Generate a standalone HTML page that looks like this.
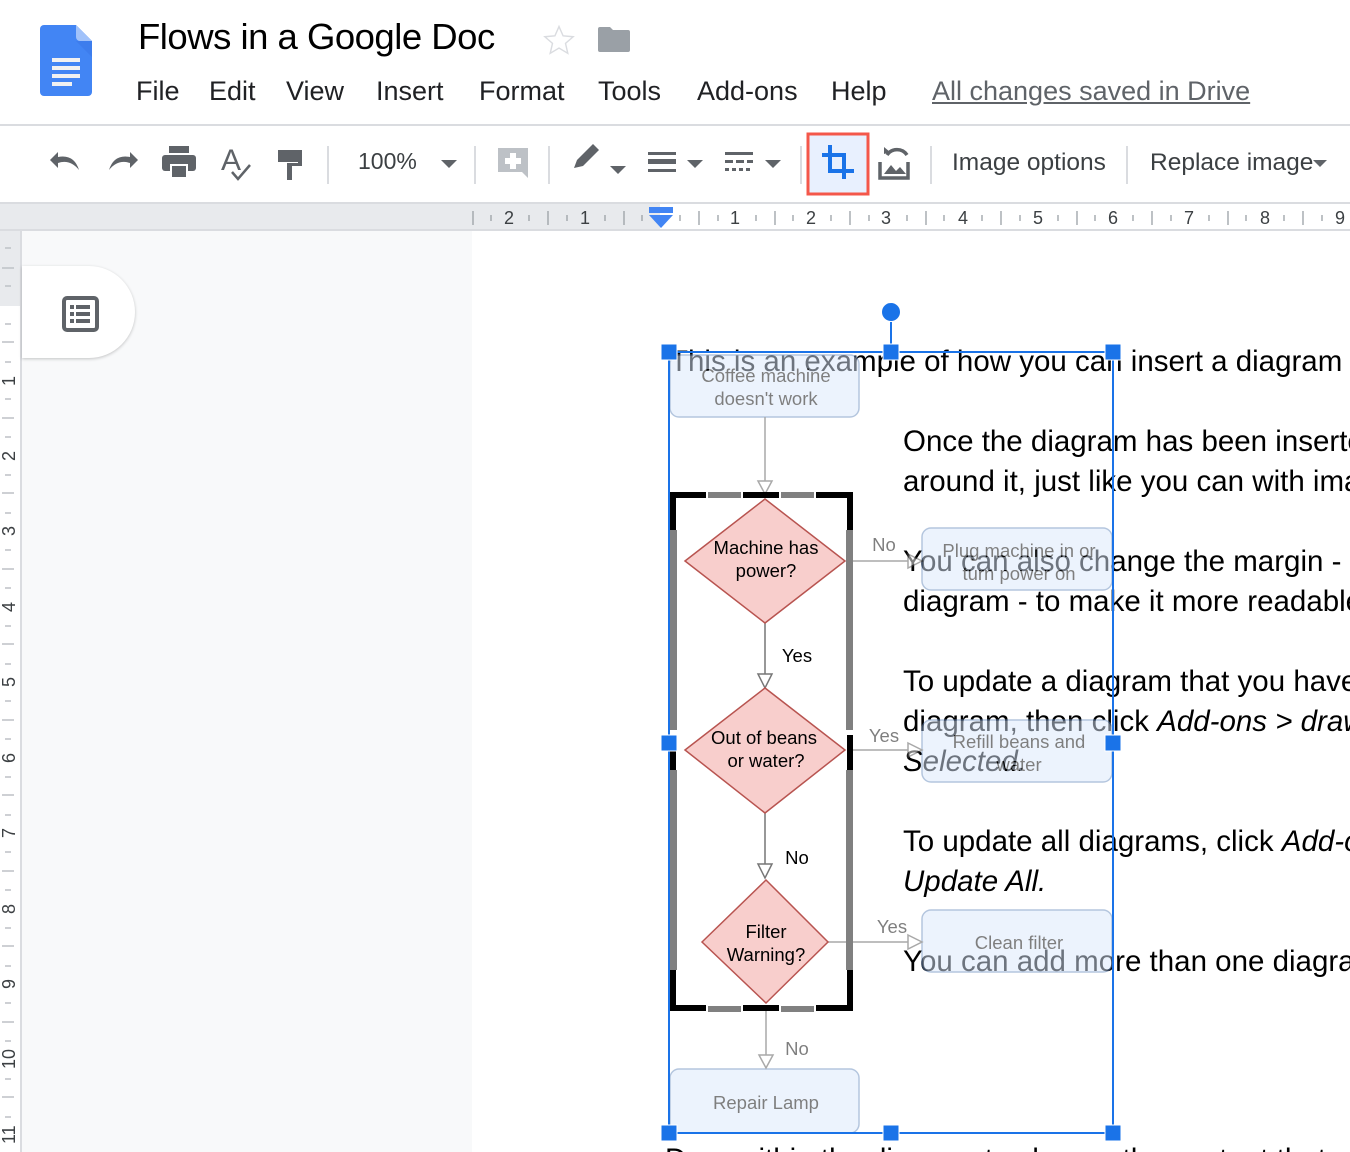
<!DOCTYPE html>
<html><head><meta charset="utf-8">
<style>
*{margin:0;padding:0;box-sizing:border-box}
html,body{width:1350px;height:1152px;overflow:hidden}
body{background:#f8f9fa;font-family:"Liberation Sans",Arial,sans-serif;position:relative}
.a{position:absolute;white-space:nowrap}
.menu{top:76px;font-size:27px;color:#202124}
.doc{position:absolute;left:472px;top:231px;width:878px;height:921px;background:#fff}
.t{position:absolute;font-size:29.5px;color:#000;white-space:nowrap;line-height:32px}
</style></head><body>
<div class="a" style="left:0;top:0;width:1350px;height:125px;background:#fff"></div>
<svg class="a" style="left:40px;top:25px" width="52" height="71" viewBox="0 0 52 71">
<path d="M4 0H36L52 16V67a4 4 0 0 1-4 4H4a4 4 0 0 1-4-4V4a4 4 0 0 1 4-4z" fill="#4285f4"/>
<path d="M36 0L52 16H40a4 4 0 0 1-4-4z" fill="#a1c2fa"/>
<path d="M36 16L52 32V16z" fill="#3b78e7" opacity=".6"/>
<rect x="12" y="33" width="28" height="4" fill="#f1f1f1"/><rect x="12" y="41" width="28" height="4" fill="#f1f1f1"/><rect x="12" y="49" width="28" height="4" fill="#f1f1f1"/><rect x="12" y="57" width="20" height="4" fill="#f1f1f1"/>
</svg>
<div class="a" style="left:138px;top:16px;font-size:36.5px;color:#000;letter-spacing:-.5px">Flows in a Google Doc</div>
<svg class="a" style="left:542px;top:23px" width="34" height="34" viewBox="0 0 24 24"><path d="M12 2.5l2.9 6.6 7.1.6-5.4 4.7 1.6 7-6.2-3.7-6.2 3.7 1.6-7L2 9.7l7.1-.6z" fill="none" stroke="#dadce0" stroke-width="1"/></svg>
<svg class="a" style="left:597px;top:25px" width="34" height="28" viewBox="0 0 34 28"><path d="M3 2h10l3 3h15a2 2 0 0 1 2 2v18a2 2 0 0 1-2 2H3a2 2 0 0 1-2-2V4a2 2 0 0 1 2-2z" fill="#9aa0a6"/></svg>
<div class="a menu" style="left:136px">File</div>
<div class="a menu" style="left:209px">Edit</div>
<div class="a menu" style="left:286px">View</div>
<div class="a menu" style="left:376px">Insert</div>
<div class="a menu" style="left:479px">Format</div>
<div class="a menu" style="left:598px">Tools</div>
<div class="a menu" style="left:697px">Add-ons</div>
<div class="a menu" style="left:831px">Help</div>
<div class="a menu" style="left:932px;color:#5f6368;text-decoration:underline">All changes saved in Drive</div>
<div class="a" style="left:0;top:124px;width:1350px;height:2px;background:#dadce0"></div>
<div class="a" style="left:0;top:126px;width:1350px;height:77px;background:#fff"></div>
<svg class="a" style="left:0;top:126px" width="1350" height="77">
<g fill="#5f6368">
<path d="M58 26 L50 34 L58 42 V37 Q70 33 79 44 Q74 28 58 31z"/>
<path d="M130 26 L138 34 L130 42 V37 Q118 33 109 44 Q114 28 130 31z"/>
<rect x="169" y="20" width="20" height="7"/><rect x="162" y="29" width="34" height="16" rx="3"/><rect x="170" y="38" width="18" height="13" fill="#fff"/><rect x="172" y="40" width="14" height="11"/>
<rect x="278" y="24" width="24" height="12"/><rect x="298" y="29" width="4" height="10"/><rect x="287" y="37" width="15" height="3"/><rect x="287" y="37" width="5" height="17"/>
<rect x="327" y="20" width="2" height="38" fill="#dadce0"/>
<path d="M441 34h16l-8 8z"/>
<rect x="474" y="20" width="2" height="38" fill="#dadce0"/>
<path d="M498 22h30v30l-6-6h-24z" fill="#bdc1c6"/><rect x="510" y="27" width="6" height="16" fill="#fff"/><rect x="505" y="32" width="16" height="6" fill="#fff"/>
<rect x="548" y="20" width="2" height="38" fill="#dadce0"/>
<path d="M574 42 l3-8 16-16 6 6-16 16z"/><path d="M610 40h16l-8 8z"/>
<rect x="648" y="26" width="28" height="3"/><rect x="648" y="33" width="28" height="5"/><rect x="648" y="43" width="28" height="3"/><path d="M687 34h16l-8 8z"/>
<rect x="725" y="26" width="28" height="3"/><rect x="725" y="34" width="8" height="3"/><rect x="736" y="34" width="8" height="3"/><rect x="747" y="34" width="6" height="3"/><rect x="725" y="42" width="4" height="3"/><rect x="732" y="42" width="4" height="3"/><rect x="739" y="42" width="4" height="3"/><rect x="746" y="42" width="4" height="3"/><path d="M765 34h16l-8 8z"/>
<rect x="800" y="20" width="2" height="38" fill="#dadce0"/>
<rect x="930" y="20" width="2" height="38" fill="#dadce0"/>
<rect x="1126" y="20" width="2" height="38" fill="#dadce0"/>
<path d="M1313 34h14l-7 7z"/>
</g>
<rect x="808" y="8" width="60" height="60" fill="#e8f0fe" stroke="#f4574a" stroke-width="3"/>
<g fill="none" stroke="#1a73e8" stroke-width="4"><path d="M822 29h22v24"/><path d="M830 19v26h24"/></g>
<g fill="none" stroke="#5f6368" stroke-width="3.5"><path d="M880 36v16h28V36"/><path d="M887 29a12 12 0 0 1 20 0"/></g>
<path d="M884 48l7-9 5 6 4-4 6 7z" fill="#5f6368"/><path d="M884 28v-7l6 5z" fill="#5f6368"/>
</svg>
<div class="a" style="left:358px;top:148px;font-size:23px;color:#3c4043">100%</div>
<div class="a" style="left:221px;top:144px;font-size:30px;color:#5f6368">A</div>
<svg class="a" style="left:222px;top:150px" width="30" height="32"><path d="M10 22l6 7 12-14" fill="none" stroke="#5f6368" stroke-width="2.5"/></svg>
<div class="a" style="left:952px;top:149px;font-size:24.5px;color:#3c4043">Image options</div>
<div class="a" style="left:1150px;top:149px;font-size:24.5px;color:#3c4043">Replace image</div>
<div class="a" style="left:0;top:202px;width:1350px;height:2px;background:#dadce0"></div>
<div class="a" style="left:0;top:204px;width:1350px;height:26px;background:#e8eaed"></div>
<div class="a" style="left:660px;top:204px;width:690px;height:26px;background:#fff"></div>
<div class="a" style="left:0;top:229px;width:1350px;height:2px;background:#dadce0"></div>
<svg class="a" style="left:0;top:204px" width="1350" height="26" font-family="Liberation Sans,Arial" font-size="18" fill="#3c4043">
<g stroke="#9aa0a6" stroke-width="1.3">
<path d="M473 7v14M548 7v14M624 7v14M699 7v14M775 7v14M850 7v14M926 7v14M1001 7v14M1077 7v14M1152 7v14M1228 7v14M1303 7v14"/>
<path d="M491 11v6M529 11v6M567 11v6M605 11v6M642 11v6M680 11v6M718 11v6M756 11v6M793 11v6M831 11v6M869 11v6M907 11v6M944 11v6M982 11v6M1020 11v6M1058 11v6M1095 11v6M1133 11v6M1171 11v6M1209 11v6M1246 11v6M1284 11v6M1322 11v6"/>
</g>
<text x="504" y="20">2</text><text x="580" y="20">1</text><text x="730" y="20">1</text><text x="806" y="20">2</text><text x="881" y="20">3</text><text x="958" y="20">4</text><text x="1033" y="20">5</text><text x="1108" y="20">6</text><text x="1184" y="20">7</text><text x="1260" y="20">8</text><text x="1335" y="20">9</text>
<rect x="649" y="3" width="24" height="6" fill="#4285f4"/><path d="M649 11h24l-12 13z" fill="#4285f4"/>
</svg>
<div class="a" style="left:0;top:231px;width:20px;height:921px;background:#fff"></div>
<div class="a" style="left:0;top:231px;width:20px;height:75px;background:#e8eaed"></div>
<div class="a" style="left:20px;top:231px;width:2px;height:921px;background:#dadce0"></div>
<svg class="a" style="left:0;top:231px" width="20" height="921" font-family="Liberation Sans,Arial" font-size="18" fill="#3c4043">
<g stroke="#bdc1c6" stroke-width="1.5">
<path d="M5 17h6M2 37h12M5 55h6M5 93h6M2 111h12M5 131h6M5 168h6M2 187h12M5 206h6M5 244h6M2 262h12M5 282h6M5 319h6M2 338h12M5 357h6M5 395h6M2 413h12M5 433h6M5 470h6M2 489h12M5 508h6M5 546h6M2 564h12M5 584h6M5 621h6M2 640h12M5 659h6M5 697h6M2 715h12M5 735h6M5 772h6M2 791h12M5 810h6M5 848h6M2 866h12M5 886h6"/>
</g>
<g transform="rotate(-90)">
<text x="-155" y="15">1</text><text x="-230" y="15">2</text><text x="-305" y="15">3</text><text x="-381" y="15">4</text><text x="-456" y="15">5</text><text x="-532" y="15">6</text><text x="-607" y="15">7</text><text x="-683" y="15">8</text><text x="-758" y="15">9</text><text x="-838" y="15">10</text><text x="-913" y="15">11</text>
</g>
</svg>
<div class="a" style="left:22px;top:266px;width:113px;height:92px;background:#fff;border-radius:0 46px 46px 0;box-shadow:0 1px 3px rgba(0,0,0,.22)"></div>
<svg class="a" style="left:62px;top:296px" width="37" height="36" viewBox="0 0 37 36"><rect x="2" y="2" width="33" height="32" rx="3" fill="none" stroke="#5f6368" stroke-width="4"/><g fill="#5f6368"><rect x="8" y="9" width="4" height="4"/><rect x="14" y="9" width="14" height="4"/><rect x="8" y="16" width="4" height="4"/><rect x="14" y="16" width="14" height="4"/><rect x="8" y="23" width="4" height="4"/><rect x="14" y="23" width="14" height="4"/></g></svg>
<div class="doc"></div>
<div class="t" style="left:670px;top:346px">This is an example of how you can insert a diagram</div>
<div class="t" style="left:903px;top:426px">Once the diagram has been inserted</div>
<div class="t" style="left:903px;top:466px">around it, just like you can with images</div>
<div class="t" style="left:903px;top:546px">You can also change the margin - the</div>
<div class="t" style="left:903px;top:586px">diagram - to make it more readable</div>
<div class="t" style="left:903px;top:666px">To update a diagram that you have</div>
<div class="t" style="left:903px;top:706px">diagram, then click <i>Add-ons &gt; draw</i></div>
<div class="t" style="left:903px;top:746px"><i>Selected.</i></div>
<div class="t" style="left:903px;top:826px">To update all diagrams, click <i>Add-ons</i></div>
<div class="t" style="left:903px;top:866px"><i>Update All.</i></div>
<div class="t" style="left:903px;top:946px">You can add more than one diagram</div>
<div class="t" style="left:665px;top:1144px">Drag within the diagram to change the content that</div>
<svg class="a" style="left:0;top:0" width="1350" height="1152" font-family="Liberation Sans,Arial" font-size="18.5" text-anchor="middle">
<g opacity=".5">
<rect x="670" y="355" width="189" height="62" rx="9" fill="#dae8fc" stroke="#6c8ebf" stroke-width="1.5"/>
<rect x="922" y="528" width="190" height="62" rx="9" fill="#dae8fc" stroke="#6c8ebf" stroke-width="1.5"/>
<rect x="922" y="720" width="190" height="62" rx="9" fill="#dae8fc" stroke="#6c8ebf" stroke-width="1.5"/>
<rect x="922" y="910" width="190" height="62" rx="9" fill="#dae8fc" stroke="#6c8ebf" stroke-width="1.5"/>
<rect x="670" y="1069" width="189" height="64" rx="9" fill="#dae8fc" stroke="#6c8ebf" stroke-width="1.5"/>
<g fill="#000"><text x="766" y="382">Coffee machine</text><text x="766" y="405">doesn't work</text>
<text x="1019" y="557">Plug machine in or</text><text x="1019" y="580">turn power on</text>
<text x="1019" y="748">Refill beans and</text><text x="1019" y="771">water</text>
<text x="1019" y="949">Clean filter</text><text x="766" y="1109">Repair Lamp</text>
<text x="884" y="551">No</text><text x="884" y="742">Yes</text><text x="892" y="933">Yes</text><text x="797" y="1055">No</text></g>
<g stroke="#555" stroke-width="1.5" fill="none"><path d="M765 417V485M850 561H914M850 750H914M828 942H914M766 1010V1058"/></g>
<g stroke="#555" stroke-width="1.5" fill="#fff"><path d="M758 481l7 13 7-13z"/><path d="M908 554l14 7-14 7z"/><path d="M908 743l14 7-14 7z"/><path d="M908 935l14 7-14 7z"/><path d="M759 1055l7 13 7-13z"/></g>
</g>
<g stroke="#777" stroke-width="1.5" fill="none"><path d="M765 623V676M765 813V866"/></g>
<g stroke="#777" stroke-width="1.5" fill="#fff"><path d="M758 674l7 14 7-14z"/><path d="M758 864l7 14 7-14z"/></g>
<g fill="#f8cecc" stroke="#b85450" stroke-width="1.5">
<path d="M685 561L765 499L845 561L765 623z"/><path d="M685 750L765 688L845 750L765 813z"/><path d="M702 942L766 880L828 942L766 1003z"/>
</g>
<g fill="#000"><text x="766" y="554">Machine has</text><text x="766" y="577">power?</text>
<text x="764" y="744">Out of beans</text><text x="766" y="767">or water?</text>
<text x="766" y="938">Filter</text><text x="766" y="961">Warning?</text>
<text x="797" y="662">Yes</text><text x="797" y="864">No</text></g>
<g fill="#808080"><rect x="670" y="530" width="7" height="200"/><rect x="846" y="530" width="7" height="200"/><rect x="670" y="770" width="7" height="200"/><rect x="846" y="770" width="7" height="200"/>
<rect x="708" y="492" width="33" height="6"/><rect x="781" y="492" width="33" height="6"/><rect x="708" y="1006" width="33" height="6"/><rect x="781" y="1006" width="33" height="6"/></g>
<g fill="none" stroke="#000" stroke-width="6"><path d="M673 530V495H706M743 495H779M816 495H850V530"/><path d="M673 970V1008H706M743 1008H779M816 1008H850V970"/><path d="M673 735V770M850 735V770"/></g>
<g stroke="#1a73e8" stroke-width="2" fill="none"><path d="M669 352H1113V1133H669z"/><path d="M891 312V352"/></g>
<g fill="#1a73e8" stroke="#fff" stroke-width="1"><rect x="661" y="344" width="16" height="16"/><rect x="883" y="344" width="16" height="16"/><rect x="1105" y="344" width="16" height="16"/><rect x="661" y="735" width="16" height="16"/><rect x="1105" y="735" width="16" height="16"/><rect x="661" y="1125" width="16" height="16"/><rect x="883" y="1125" width="16" height="16"/><rect x="1105" y="1125" width="16" height="16"/><circle cx="891" cy="312" r="9.5"/></g>
</svg>
</body></html>
